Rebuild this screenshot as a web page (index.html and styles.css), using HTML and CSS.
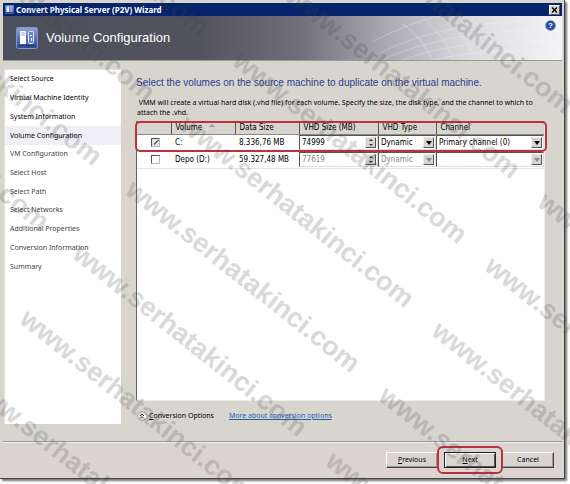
FILE: index.html
```html
<!DOCTYPE html>
<html lang="en">
<head>
<meta charset="utf-8">
<title>Convert Physical Server (P2V) Wizard</title>
<link rel="stylesheet" href="styles.css">
</head>
<body>
<svg class="defs" width="0" height="0" aria-hidden="true">
  <symbol id="servers" viewBox="0 0 22 22">
    <linearGradient id="tile" x2="0" y2="1"><stop stop-color="#8ea4dc"/><stop offset="1" stop-color="#2c4690"/></linearGradient>
    <rect x=".5" y=".5" width="21" height="21" rx="2" fill="url(#tile)" stroke="#8397cf"/>
    <rect x="4" y="4" width="6" height="13" fill="#fff"/>
    <path d="M5 6h4M5 8h4" stroke="#9aa9d0"/>
    <rect x="12.500" y="4.500" width="5" height="12" rx="1" fill="#6d84c2" stroke="#e6ecfa"/>
    <path d="M14 8.500h2M15.500 11v3" stroke="#e6ecfa"/>
    <path d="M3 18.500h16" stroke="#1f3678"/>
  </symbol>
</svg>
<main class="window">
  <header class="titlebar">
    <svg class="app-icon"><use href="#servers"/></svg>
    <h1>Convert Physical Server (P2V) Wizard</h1>
    <button class="close" aria-label="Close"><svg viewBox="0 0 10 10"><path d="M2 2l6 6M8 2L2 8" stroke="#000" stroke-width="1.700"/></svg></button>
  </header>
  <div class="banner">
    <svg class="mesh" viewBox="0 0 190 44" preserveAspectRatio="none" aria-hidden="true">
      <g fill="none" stroke="#fff" stroke-opacity=".24">
        <path d="M0 42Q60 4 190 4M10 44Q80 12 190 14M30 44Q90 22 190 25M60 44Q110 32 190 36M0 26Q50 0 90-4"/>
        <path d="M30 8Q50 20 60 44M50 0Q72 20 82 44M74 0Q94 20 104 44M98 0Q116 20 126 44M122 0Q138 20 148 44M146 0Q160 20 168 44M168 0Q180 20 186 44"/>
      </g>
    </svg>
    <svg class="page-icon"><use href="#servers"/></svg>
    <h2>Volume Configuration</h2>
    <button class="help" aria-label="Help">?</button>
  </div>
  <div class="body">
    <nav class="steps">
      <ul>
        <li>Select Source</li>
        <li>Virtual Machine Identity</li>
        <li>System Information</li>
        <li class="current" aria-current="step">Volume Configuration</li>
        <li class="later">VM Configuration</li>
        <li class="later">Select Host</li>
        <li class="later">Select Path</li>
        <li class="later">Select Networks</li>
        <li class="later">Additional Properties</li>
        <li class="later">Conversion Information</li>
        <li class="later">Summary</li>
      </ul>
    </nav>
    <section class="content">
      <h3>Select the volumes on the source machine to duplicate on the virtual machine.</h3>
      <p>&nbsp;VMM will create a virtual hard disk (.vhd file) for each volume. Specify the size, the disk type, and the channel to which to attach the .vhd.</p>
      <div class="volumes">
        <table>
          <colgroup><col class="c-check"><col class="c-name"><col class="c-data"><col class="c-size"><col class="c-type"><col></colgroup>
          <thead>
            <tr><th></th><th>Volume <i class="sort"></i></th><th>Data Size</th><th>VHD Size (MB)</th><th>VHD Type</th><th>Channel</th></tr>
          </thead>
          <tbody>
            <tr>
              <td class="check"><input type="checkbox" checked disabled aria-label="Volume C:"></td>
              <td>C:</td>
              <td>8.336,76 MB</td>
              <td class="field"><div class="box"><input type="text" value="74999" aria-label="VHD size of C:"><span class="spin"><i></i><i></i></span></div></td>
              <td class="field"><div class="box"><select aria-label="VHD type of C:"><option>Dynamic</option></select><span class="drop"></span></div></td>
              <td class="field"><div class="box"><select aria-label="Channel of C:"><option>Primary channel (0)</option></select><span class="drop"></span></div></td>
            </tr>
            <tr>
              <td class="check"><input type="checkbox" aria-label="Volume Depo (D:)"></td>
              <td>Depo (D:)</td>
              <td>59.327,48 MB</td>
              <td class="field off"><div class="box"><input type="text" value="77619" disabled aria-label="VHD size of Depo (D:)"><span class="spin"><i></i><i></i></span></div></td>
              <td class="field off"><div class="box"><select disabled aria-label="VHD type of Depo (D:)"><option>Dynamic</option></select><span class="drop"></span></div></td>
              <td class="field off"><div class="box"><select disabled aria-label="Channel of Depo (D:)"><option></option></select><span class="drop"></span></div></td>
            </tr>
          </tbody>
        </table>
      </div>
      <div class="options">
        <button class="expander"><svg viewBox="0 0 10 10"><circle cx="5" cy="5" r="4.500" fill="#fff" stroke="#aaa"/><path d="M3 5l2-2 2 2M3 7.500l2-2 2 2" fill="none" stroke="#333"/></svg><span><u>C</u>onversion Options</span></button>
        <a href="#options">More about conversion options</a>
      </div>
    </section>
  </div>
  <footer class="actions">
    <button class="btn"><u>P</u>revious</button>
    <div class="ring"><button class="btn default"><u>N</u>ext</button></div>
    <button class="btn">Cancel</button>
  </footer>
</main>
<svg class="watermark" aria-hidden="true">
  <defs><text id="mark" transform="rotate(38.500)">www.serhatakinci.com</text></defs>
  <use href="#mark" x="-240" y="115"/><use href="#mark" x="-187" y="51"/><use href="#mark" x="-134" y="-14"/><use href="#mark" x="-81" y="-78"/><use href="#mark" x="-27" y="-143"/>
  <use href="#mark" x="-36" y="386"/><use href="#mark" x="18" y="322"/><use href="#mark" x="71" y="257"/><use href="#mark" x="124" y="193"/><use href="#mark" x="178" y="128"/><use href="#mark" x="231" y="64"/><use href="#mark" x="284" y="-1"/><use href="#mark" x="337" y="-66"/>
  <use href="#mark" x="324" y="464"/><use href="#mark" x="377" y="399"/><use href="#mark" x="430" y="334"/><use href="#mark" x="483" y="269"/><use href="#mark" x="536" y="205"/>
</svg>
</body>
</html>
```

FILE: styles.css
```css
*, *::before, *::after { box-sizing: border-box; }
html, body { height: 100%; }
body {
  margin: 0;
  padding: 0 5px 5px 0;
  overflow: hidden;
  background: #fff;
  color: #000;
  font: 7px/10px "Noto Sans", "Liberation Sans", sans-serif;
}
h1, h2, h3, p, ul { margin: 0; padding: 0; font-weight: normal; }
button, input, select { font: inherit; color: inherit; margin: 0; padding: 0; }
.defs { position: absolute; }

.window {
  display: flex;
  flex-direction: column;
  height: 100%;
  padding: 3px 2px 1px 3px;
  background: #d8d5cf;
  border-right: 1px solid #444;
  border-bottom: 1px solid #444;
  box-shadow: 2px 2px 2px #777;
}

.titlebar {
  display: flex;
  align-items: center;
  gap: 2px;
  height: 13px;
  padding: 0 2px;
  background: #06246c;
  color: #fff;
}
.titlebar h1 { flex: 1; font: bold 8px/12px "Noto Sans", sans-serif; white-space: nowrap; }
.app-icon { width: 9px; height: 9px; }
.close { display: flex; width: 11px; height: 10px; border: 1px solid; border-color: #fff #555 #555 #fff; background: #d8d5cf; }
.close svg { width: 100%; height: 100%; }

.banner {
  position: relative;
  display: flex;
  align-items: center;
  gap: 8px;
  height: 45px;
  padding: 0 6px 0 13px;
  background: linear-gradient(90deg, #4c4f5c, #53535f 35%, #6f6e7a 53%, #a9a8b0 68%, #dcdce0 84%, #f4f4f6);
  border-bottom: 1px solid #999;
  color: #fff;
}
.banner h2 { flex: 1; font: 13px/16px "Liberation Sans", sans-serif; }
.mesh { position: absolute; right: 0; top: 0; width: 34%; height: 100%; }
.page-icon { width: 22px; height: 22px; }
.help {
  position: relative;
  align-self: flex-start;
  width: 11px;
  height: 11px;
  margin-top: 4px;
  border: 1px solid #8da2d4;
  border-radius: 50%;
  background: #2c4a9c;
  color: #fff;
  font: bold 8px/9px "Liberation Sans", sans-serif;
}

.body { flex: 1; display: flex; gap: 15px; padding: 8px 17px 13px 1px; border-bottom: 1px solid #999; }
.steps { width: 117px; margin-bottom: 4px; background: #fff; border: 1px solid #e4e2de; border-width: 1px 0 0 1px; }
.steps ul { display: grid; grid-auto-rows: 1fr; height: 206px; list-style: none; }
.steps li { display: flex; align-items: center; padding-left: 5px; }
.steps .current { background: #f1eff6; }
.steps .later { color: #444; }

.content { flex: 1; min-width: 0; display: flex; flex-direction: column; }
.content h3 { padding-top: 6px; font: 10px/15px "Liberation Sans", sans-serif; color: #2a3e8f; white-space: nowrap; }
.content p { margin-top: 8px; padding: 0 8px 3px 1px; }

.volumes {
  position: relative;
  flex: 1;
  background: #fff;
  border: 1px solid;
  border-color: #777 #eee #eee #666;
  font: 8px/10px "DejaVu Sans Condensed", "DejaVu Sans", sans-serif;
}
/* Highlight around the header and the first volume. */
.volumes::after {
  content: "";
  position: absolute;
  inset: -1px -3px auto -2px;
  height: 31px;
  border: 2px solid #c0303b;
  border-radius: 5px;
}
table { width: 100%; table-layout: fixed; border-collapse: collapse; }
.c-check { width: 34px; }
.c-name { width: 64px; }
.c-data { width: 64px; }
.c-size { width: 79px; }
.c-type { width: 58px; }
th { height: 12px; padding: 1px 0 0 4px; background: #d8d5cf; border-left: 1px solid #555; border-bottom: 1px solid #888; font-weight: normal; text-align: left; white-space: nowrap; }
th:first-child { border-left: 0; }
td { height: 17px; padding: 0 0 0 4px; border-bottom: 1px solid #e4e4e4; white-space: nowrap; }
.sort { display: inline-block; margin: 0 0 3px 4px; border: 3px solid transparent; border-top: 0; border-bottom: 3px solid #999; }
td.check { padding-left: 14px; }
.check input { display: block; appearance: none; width: 9px; height: 9px; border: 1px solid; border-color: #555 #bbb #bbb #555; }
.check input:checked { background: linear-gradient(-45deg, transparent 42%, #666 42% 62%, transparent 62%) 2px 1px / 5px 5px no-repeat, #e4e2de; }
td.field { padding: 0; }
.box { position: relative; display: flex; height: 15px; border: 1px solid; border-color: #555 #ddd #ddd #555; background: #fff; }
.box input, .box select { flex: 1; min-width: 0; appearance: none; border: 0; background: none; padding-left: 2px; opacity: 1; }
.off .box { color: #888; }
.drop, .spin { width: 11px; margin: 1px; background: #d8d5cf; border: 1px solid; border-color: #eee #555 #555 #eee; display: flex; align-items: center; justify-content: center; }
.drop::after { content: ""; border: 3px solid transparent; border-top: 4px solid #000; border-bottom: 0; }
.off .drop::after { border-top-color: #888; }
.spin { flex-direction: column; justify-content: space-around; }
.spin i { border: 2px solid transparent; border-top: 0; border-bottom: 2px solid #333; }
.spin i + i { border-bottom: 0; border-top: 2px solid #333; }

.options { display: flex; align-items: center; gap: 15px; height: 24px; margin-top: 3px; padding: 0 1px; }
.expander { display: flex; align-items: center; gap: 2px; border: 0; background: none; }
.expander svg { width: 10px; height: 10px; }
.options a { color: #1a62b0; }

.actions { display: flex; align-items: center; justify-content: flex-end; gap: 6px; height: 35px; padding-right: 8px; border-top: 1px solid #eee; background: #dcd4d1; }
.btn { width: 52px; height: 16px; border: 1px solid; border-color: #fff #444 #444 #fff; box-shadow: inset -1px -1px #999; background: #d8d5cf; }
.default { border-color: #222; box-shadow: inset 1px 1px #fff, inset -1px -1px #555; }
.ring { position: relative; display: flex; }
.ring::after { content: ""; position: absolute; inset: -6px -7px; border: 2px solid #c0303b; border-radius: 6px; pointer-events: none; }

.watermark {
  position: absolute;
  inset: 0;
  width: 100%;
  height: 100%;
  pointer-events: none;
  font: bold 27px "Liberation Sans", sans-serif;
  fill: #444;
  opacity: .2;
}
```
